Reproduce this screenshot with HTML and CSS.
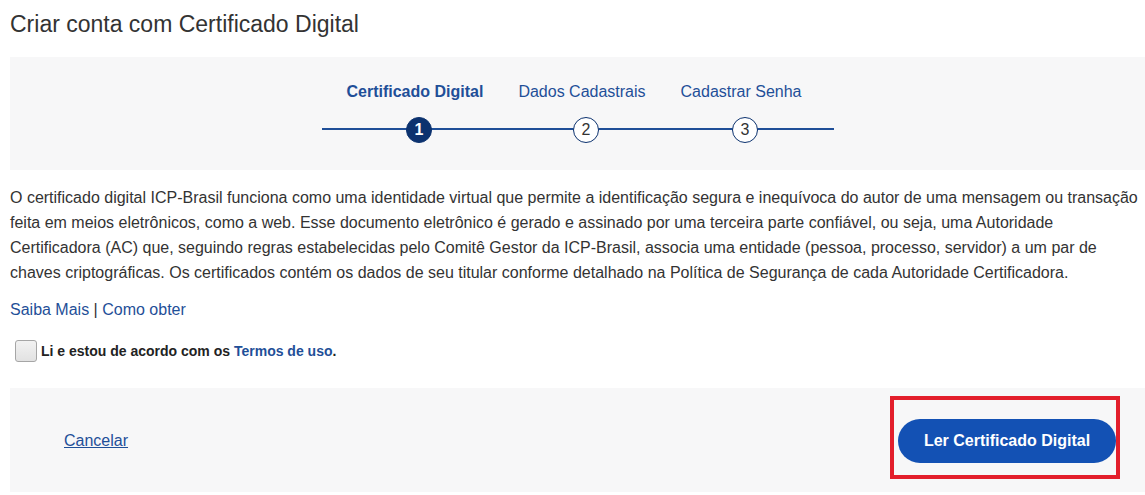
FILE: index.html
```html
<!DOCTYPE html>
<html lang="pt-BR">
<head>
<meta charset="utf-8">
<title>Criar conta com Certificado Digital</title>
<link rel="stylesheet" href="styles.css">
</head>
<body>
<main class="page">
  <h1 class="title">Criar conta com Certificado Digital</h1>

  <section class="stepper-panel">
    <div class="stepper">
      <div class="step step-active">
        <span class="step-label">Certificado Digital</span>
        <span class="step-num">1</span>
      </div>
      <div class="step">
        <span class="step-label">Dados Cadastrais</span>
        <span class="step-num">2</span>
      </div>
      <div class="step">
        <span class="step-label">Cadastrar Senha</span>
        <span class="step-num">3</span>
      </div>
    </div>
  </section>

  <p class="intro">O certificado digital ICP-Brasil funciona como uma identidade virtual que permite a identificação segura e inequívoca do autor de uma mensagem ou transação feita em meios eletrônicos, como a web. Esse documento eletrônico é gerado e assinado por uma terceira parte confiável, ou seja, uma Autoridade Certificadora (AC) que, seguindo regras estabelecidas pelo Comitê Gestor da ICP-Brasil, associa uma entidade (pessoa, processo, servidor) a um par de chaves criptográficas. Os certificados contém os dados de seu titular conforme detalhado na Política de Segurança de cada Autoridade Certificadora.</p>

  <p class="links"><a href="#" class="link">Saiba Mais</a> | <a href="#" class="link">Como obter</a></p>

  <label class="agree">
    <span class="checkbox"></span>
    <span class="agree-text">Li e estou de acordo com os <a href="#" class="terms">Termos de uso</a>.</span>
  </label>

  <footer class="actions">
    <a href="#" class="cancel">Cancelar</a>
    <div class="highlight">
      <button class="primary" type="button">Ler Certificado Digital</button>
    </div>
  </footer>
</main>
</body>
</html>
```

FILE: styles.css
```css
* { box-sizing: border-box; }

html, body {
  margin: 0;
  padding: 0;
  background: #ffffff;
}

body {
  font-family: "Liberation Sans", Arial, sans-serif;
  color: #333333;
}

.page {
  padding-left: 10px;
}

.title {
  margin: 0;
  padding-top: 10px;
  height: 57px;
  font-size: 23px;
  font-weight: normal;
  line-height: 29px;
  color: #333333;
}

.stepper-panel {
  background: #f7f7f8;
  height: 113px;
  display: flex;
  justify-content: center;
  padding-top: 24px;
}

.stepper {
  width: 512px;
  display: flex;
  justify-content: center;
  gap: 35px;
  padding-right: 7px;
  background: linear-gradient(#1f4f98, #1f4f98) no-repeat;
  background-size: 100% 2px;
  background-position: 0 47px;
  height: 62px;
}

.step {
  display: flex;
  flex-direction: column;
  align-items: center;
}

.step-label {
  font-size: 16px;
  line-height: 22px;
  color: #1f4f98;
  white-space: nowrap;
}

.step-active .step-label {
  font-weight: bold;
}

.step-num {
  margin-top: 14px;
  margin-left: 8px;
  width: 26px;
  height: 26px;
  border-radius: 50%;
  border: 1px solid #0c326f;
  background: #ffffff;
  color: #333333;
  font-size: 16px;
  line-height: 24px;
  text-align: center;
}

.step-active .step-num {
  background: #0c326f;
  color: #ffffff;
  font-weight: bold;
}

.intro {
  margin: 15px 0 0 0;
  padding-right: 6px;
  font-size: 16px;
  line-height: 25px;
  color: #333333;
}

.links {
  margin: 12px 0 0 0;
  font-size: 16px;
  line-height: 25px;
  color: #333333;
}

.link {
  color: #1f4f98;
  text-decoration: none;
}

.agree {
  display: flex;
  align-items: center;
  gap: 4px;
  margin-top: 18px;
  padding-left: 5px;
  height: 22px;
}

.checkbox {
  width: 22px;
  height: 22px;
  border: 1px solid #a6a6a6;
  border-radius: 3px;
  background: linear-gradient(#f2f2f2, #e2e2e2);
}

.agree-text {
  font-size: 14px;
  font-weight: bold;
  color: #222222;
}

.terms {
  color: #1f4f98;
  text-decoration: none;
}

.actions {
  margin-top: 26px;
  background: #f7f7f8;
  height: 104px;
  display: flex;
  align-items: center;
  justify-content: space-between;
  padding: 0 25px 0 54px;
}

.cancel {
  font-size: 16px;
  color: #1f4f98;
  text-decoration: underline;
  margin-top: 2px;
}

.highlight {
  border: 4px solid #e31e2b;
  padding: 19px 0 12px 4px;
  margin-top: -6px;
}

.primary {
  display: block;
  width: 218px;
  height: 44px;
  border: none;
  border-radius: 22px;
  background: #1351b4;
  color: #ffffff;
  font-family: "Liberation Sans", Arial, sans-serif;
  font-size: 16px;
  font-weight: bold;
  cursor: pointer;
}
```
